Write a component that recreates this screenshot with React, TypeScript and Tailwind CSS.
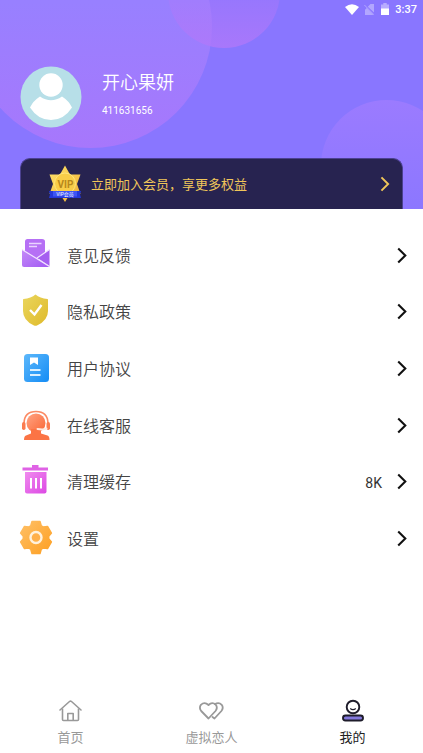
import type { ReactNode } from 'react'

function Chevron({ className }: { className?: string }) {
  return (
    <svg viewBox="0 0 10 18" className={className} fill="none" stroke="currentColor" strokeWidth="2.2">
      <path d="M1 1.5 8.5 9 1 16.5" />
    </svg>
  )
}

function StatusBar() {
  return (
    <div className="flex h-[18px] items-center justify-end pr-[6px] text-white">
      <svg viewBox="0 0 14 11" className="mr-[5px] h-[11px] w-[14px]" fill="currentColor">
        <path d="M0 3Q7-2.6 14 3L7 11Z" />
      </svg>
      <svg viewBox="0 0 10 11" className="mr-[7px] h-[11px] w-[10px] opacity-35" fill="currentColor">
        <path d="M10 0v8.4L3.8 2.8 6.5 0ZM2.8 4 9.5 11H1V5.8Z" />
        <path d="M.4 1 10 10.8" stroke="currentColor" strokeWidth="1" />
      </svg>
      <svg viewBox="0 0 8 12" className="mr-[6px] h-[12px] w-[8px]" fill="currentColor">
        <path d="M0 1.5h2.3V0h3.4v1.5H8V6H0Z" opacity=".4" />
        <path d="M0 5.5h8V12H0Z" />
      </svg>
      <span className="text-[11px] font-medium leading-none">3:37</span>
    </div>
  )
}

function Avatar() {
  return (
    <svg viewBox="0 0 62 62" className="size-[62px] shrink-0">
      <circle cx="31" cy="31" r="30.5" fill="#b7dfe8" />
      <circle cx="31" cy="19" r="11.7" fill="#fff" />
      <path d="M20 30.5Q31 38 42 30.5Q49 35 52 41.5Q44 54 31 54T10 41.5Q13 35 20 30.5Z" fill="#fff" />
    </svg>
  )
}

function VipBadge() {
  return (
    <svg viewBox="0 0 32 38" className="h-[38px] w-[32px] shrink-0">
      <defs>
        <linearGradient id="gold" x1="0" y1="0" x2="1" y2="1">
          <stop offset="0" stopColor="#ffe36b" />
          <stop offset="1" stopColor="#efaf35" />
        </linearGradient>
      </defs>
      <path d="m16 .5 5 9 10.500 0L28 19l3.500 10L21 29 16 37l-5-8L.5 29 4 19 .5 9.500 11 9.500Z" fill="url(#gold)" />
      <circle cx="16" cy="18.5" r="10.5" fill="#f9cd48" stroke="#ffe67c" />
      <text x="16.5" y="23" textAnchor="middle" fontSize="10" fontWeight="700" fill="#b8881c">VIP</text>
      <path d="M0 26h32l-1 3.5 1 3.5H0l1-3.5Z" fill="#2438d8" />
      <path d="M4 26h24v5.5H4Z" fill="#3d55f5" />
      <text x="16" y="30.5" textAnchor="middle" fontSize="5" fill="#fff">VIP会员</text>
    </svg>
  )
}

function MailIcon() {
  return (
    <svg viewBox="0 0 32 32" className="size-8">
      <defs>
        <linearGradient id="mail" x1="0" y1="0" x2="1" y2="1">
          <stop offset="0" stopColor="#c58bf8" />
          <stop offset="1" stopColor="#a159f3" />
        </linearGradient>
      </defs>
      <path d="M5 16V2.5Q5 0 7.500 0H22Q25 0 25 2.5V15l-8 6Z" fill="#b670f5" />
      <path d="M9 4.5h12.5M9 7.5h8" stroke="#ead4ff" strokeWidth="1.4" />
      <path d="M2 10.5 29.5 27q0 1-1.5 1H4q-2 0-2-2Z" fill="url(#mail)" />
      <path d="M29.5 10.5V27L17.5 19Z" fill="#a55ff0" />
      <path d="M2 10.5 29.5 27.5M17 19 29.5 10.5" stroke="#f2e4ff" strokeWidth="1.2" />
    </svg>
  )
}

function ShieldIcon() {
  return (
    <svg viewBox="0 0 32 32" className="size-8 overflow-visible">
      <defs>
        <linearGradient id="shield" x1="0" y1="0" x2="1" y2="1">
          <stop offset="0" stopColor="#ead65d" />
          <stop offset="1" stopColor="#dfba2b" />
        </linearGradient>
      </defs>
      <path d="M15.5-1.5Q20 2.2 27.500 3q.5 0 .5 1v11q0 9.5-11 14.5-1.5.7-3 0Q3 24.500 3 15V4q0-1 .5-1Q11 2.200 15.500-1.500Z" fill="url(#shield)" />
      <path d="m10 14 4.500 4.500L21.500 9" fill="none" stroke="#fff" strokeWidth="2.4" />
    </svg>
  )
}

function DocIcon() {
  return (
    <svg viewBox="0 0 32 32" className="size-8">
      <defs>
        <linearGradient id="doc" x1="0" y1="0" x2="1" y2="1">
          <stop offset="0" stopColor="#5db8fb" />
          <stop offset="1" stopColor="#148cf5" />
        </linearGradient>
      </defs>
      <rect x="4" y="1" width="25" height="28" rx="3.5" fill="url(#doc)" />
      <path d="M10 4.5h8V12l-4-2.5-4 2.5Z" fill="#fff" />
      <path d="M10 17h10.5M10 22h10.5" stroke="#d9efff" strokeWidth="2.2" />
    </svg>
  )
}

function SupportIcon() {
  return (
    <svg viewBox="0 0 32 32" className="size-8">
      <defs>
        <linearGradient id="support" x1="0" y1="0" x2="1" y2="1">
          <stop offset="0" stopColor="#ffa484" />
          <stop offset="1" stopColor="#fa6735" />
        </linearGradient>
      </defs>
      <path d="M4 14Q4.500 2.500 16 2.500T28 14" fill="none" stroke="#fb8a64" strokeWidth="1.6" />
      <rect x="2" y="13" width="3.5" height="8" rx="1.7" fill="#fb7c50" />
      <rect x="26.5" y="13" width="3.5" height="8" rx="1.7" fill="#fb7c50" />
      <circle cx="16" cy="14" r="9.5" fill="url(#support)" />
      <path d="M11 20h10v4.500l6.500 2q2 .8 2 4.500H4q0-3.700 2-4.500l5-2Z" fill="#fb7445" />
      <path d="M26.500 19.500Q24 21 17.500 20" fill="none" stroke="#ffe8de" strokeWidth="2" strokeLinecap="round" />
    </svg>
  )
}

function TrashIcon() {
  return (
    <svg viewBox="0 0 32 32" className="size-8 overflow-visible">
      <defs>
        <linearGradient id="trash" x1="0" y1="0" x2="1" y2="1">
          <stop offset="0" stopColor="#f08aee" />
          <stop offset="1" stopColor="#dc49e4" />
        </linearGradient>
      </defs>
      <path d="M12-1h6.500V1.500H28v3H2.500v-3H12Z" fill="#df62e5" />
      <path d="M5 6h21.500v19.500q0 2-2 2H7q-2 0-2-2Z" fill="url(#trash)" />
      <path d="M11 12V22.500M16 12V22.500M21 12V22.500" stroke="#fff" strokeWidth="2" />
    </svg>
  )
}

function GearIcon() {
  return (
    <svg viewBox="0 0 32 32" className="size-8 overflow-visible">
      <defs>
        <linearGradient id="gear" x1="0" y1="0" x2="1" y2="1">
          <stop offset="0" stopColor="#ffc066" />
          <stop offset="1" stopColor="#fd9f22" />
        </linearGradient>
      </defs>
      <path
        d="M12-1.500h8l1.300 4.400 1.900 1.100 4.300-.6 3.900 6.700-2.700 3.300v2.200l2.700 3.300-3.900 6.700-4.300-.6-1.900 1.100L20 30.500h-8l-1.300-4.400L8.800 25l-4.300.6L.6 18.900l2.700-3.300v-2.200L.6 10.100l3.900-6.700 4.300.6 1.900-1.100Z"
        fill="url(#gear)"
        stroke="url(#gear)"
        strokeWidth="1.5"
        strokeLinejoin="round"
      />
      <circle cx="16" cy="14.5" r="5.5" fill="#ffb04a" stroke="#fff1dc" strokeWidth="2.4" />
    </svg>
  )
}

function HomeIcon() {
  return (
    <svg viewBox="0 0 24 24" className="size-6" fill="none" stroke="#999" strokeWidth="1.6" strokeLinejoin="round">
      <path d="M1 11 10.5 2.500q1-.8 2 0L22 11" strokeLinecap="round" />
      <path d="M3.500 9.500V20.500q0 1 1 1h14q1 0 1-1V9.500M8.800 21.500v-7h5.400v7" />
    </svg>
  )
}

function HeartsIcon() {
  return (
    <svg viewBox="0 0 24 24" className="size-6 overflow-visible" fill="none" stroke="#999" strokeWidth="1.8" strokeLinejoin="round" strokeLinecap="round">
      <path d="M8.500 19.500 1.200 12Q-1.200 9 .9 5.800 4.500 2.300 8.500 6q3.700-3.700 7.300-.2 2.200 3.200-.3 6.200Z" />
      <path d="M15 5q4-2.200 6.700.8 2.200 3.200-.3 6.200L14.500 19.500l-2-1.500" />
    </svg>
  )
}

function MineIcon() {
  return (
    <svg viewBox="0 0 24 24" className="size-6" fill="none" stroke="#1e1c2a" strokeWidth="1.9">
      <circle cx="12" cy="8" r="6.3" />
      <path d="M9.200 9.500q2.800 2.200 5.600 0" strokeWidth="1.2" />
      <rect x="2" y="16.5" width="20" height="5" rx="2.5" fill="#8378dc" />
    </svg>
  )
}

const menu: { label: string; icon: ReactNode; value?: string }[] = [
  { label: '意见反馈', icon: <MailIcon /> },
  { label: '隐私政策', icon: <ShieldIcon /> },
  { label: '用户协议', icon: <DocIcon /> },
  { label: '在线客服', icon: <SupportIcon /> },
  { label: '清理缓存', icon: <TrashIcon />, value: '8K' },
  { label: '设置', icon: <GearIcon /> },
]

const tabs = [
  { label: '首页', icon: <HomeIcon />, active: false },
  { label: '虚拟恋人', icon: <HeartsIcon />, active: false },
  { label: '我的', icon: <MineIcon />, active: true },
]

export default function App() {
  return (
    <div className="flex min-h-screen flex-col bg-white font-[Roboto,'Noto_Sans_CJK_SC',sans-serif]">
      <header className="relative overflow-hidden bg-[#8976ff]">
        <div className="absolute -top-[95px] -left-[31px] size-[243px] rounded-full bg-linear-to-b from-[#9880ff] from-40% to-[#a777fc]" />
        <div className="absolute -top-[64px] left-[168px] size-[112px] rounded-full bg-linear-to-b from-[#b078fa]/30 from-50% to-[#b078fa]/80" />
        <div className="absolute top-[100px] -right-[29px] size-[131px] rounded-full bg-linear-to-b from-[#9b7bff] to-[#8976ff]" />

        <div className="relative">
          <StatusBar />
          <div className="mt-12 flex items-center pl-5">
            <Avatar />
            <div className="mb-1 ml-5 flex flex-col gap-2 text-white">
              <h1 className="text-[18px] font-[350] leading-6">开心果妍</h1>
              <p className="text-[10px] leading-4">411631656</p>
            </div>
          </div>
          <button className="mx-5 mt-[30px] flex h-[51px] w-[calc(100%-40px)] items-center rounded-t-[10px] border border-b-0 border-[#4b418f] bg-[#272350] pr-3 pl-7 text-[#f0c65a]">
            <VipBadge />
            <span className="ml-[10px] pt-[2px] text-[13px] leading-5">立即加入会员，享更多权益</span>
            <Chevron className="ml-auto h-4 w-[10px]" />
          </button>
        </div>
      </header>

      <main className="flex-1 pt-[18px]">
        <ul className="grid h-[340px] grid-rows-6">
          {menu.map((item) => (
            <li key={item.label}>
              <button className="flex h-full w-full items-center pr-4 pl-5">
                {item.icon}
                <span className="ml-[15px] pt-[3px] text-[16px] font-[350] leading-6 text-[#444]">{item.label}</span>
                {item.value && <span className="ml-auto pt-[3px] text-[14px] leading-6 text-[#333]">{item.value}</span>}
                <Chevron className={item.value ? 'ml-[15px] h-[17px] w-[10px] text-[#111]' : 'ml-auto h-[17px] w-[10px] text-[#111]'} />
              </button>
            </li>
          ))}
        </ul>
      </main>

      <nav className="grid grid-cols-3 pb-[5px]">
        {tabs.map((tab) => (
          <a key={tab.label} href="#" className="flex flex-col items-center gap-[5px]">
            {tab.icon}
            <span className={tab.active ? 'text-[13px] leading-5 text-[#222]' : 'text-[13px] leading-5 text-[#999]'}>{tab.label}</span>
          </a>
        ))}
      </nav>
    </div>
  )
}
